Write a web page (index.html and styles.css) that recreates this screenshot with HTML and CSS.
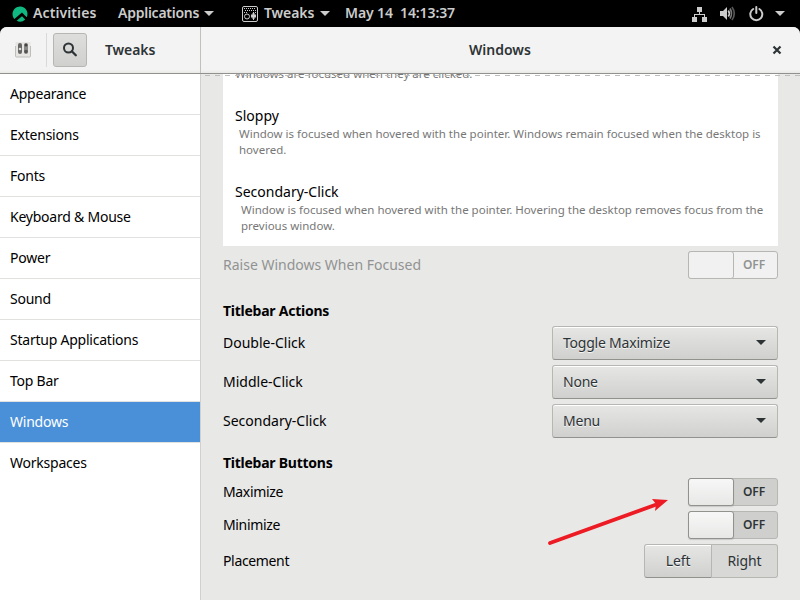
FILE: index.html
```html
<!DOCTYPE html>
<html lang="en">
<head>
<meta charset="utf-8">
<title>Tweaks</title>
<link rel="stylesheet" href="styles.css">
</head>
<body>
<header class="topbar">
  <svg class="distro" width="16" height="16" viewBox="0 0 16 16"><path fill="#10b981" d="M14.7 11.200a7.500 7.500 0 0 0 .8-3.200A7.500 7.500 0 1 0 2.300 12.900L10 6.500zM13.200 13.400 10 10.200 4.700 14.800a7.500 7.500 0 0 0 8.500-1.400z"/></svg>
  <span class="activities">Activities</span>
  <span class="applications">Applications</span>
  <svg class="caret" width="10" height="5"><path d="M0 0h10L5 5z"/></svg>
  <svg class="appicon" width="16" height="16" fill="none" stroke="#ccc"><rect x=".5" y=".5" width="15" height="15" rx="1.5"/><path stroke-dasharray="1 1" d="M2 2.5h12M3 4.5h11M2 6.5h3M11 6.5h3"/><circle cx="5" cy="10.5" r="2.5"/><path d="M9 9.5h5M9 10.5h5M11.5 7v7M10 8v4h3V8z"/></svg>
  <span class="appname">Tweaks</span>
  <svg class="caret" width="10" height="5"><path d="M0 0h10L5 5z"/></svg>
  <span class="clock">May 14&nbsp; 14:13:37</span>
  <div class="tray">
    <svg width="16" height="16"><path fill="#ccc" d="M5 1h5v5H8v2h5v3h2v5h-5v-5h2V9H3v2h2v5H0v-5h2V8h5V6H5z"/></svg>
    <svg width="16" height="16" fill="none"><path fill="#ccc" d="M0 5h3l4-4v13l-4-4H0z"/><path stroke="#ccc" stroke-width="1.7" d="M8.3 4.5q2 3 0 6"/><path stroke="#777" stroke-width="1.7" d="M10 2.5q3 5 0 10"/><path stroke="#555" stroke-width="1.7" d="M12 1q4.500 6.500 0 13"/></svg>
    <svg width="15" height="16" fill="none" stroke="#ccc" stroke-width="2" stroke-linecap="round"><path d="M4.200 3a6 6 0 1 0 6.200 0M7.300 1v6"/></svg>
    <svg class="caret" width="10" height="5"><path d="M0 0h10L5 5z"/></svg>
  </div>
</header>
<main class="window">
  <div class="headerbar">
    <div class="head-left">
      <svg class="tweaks" width="16" height="16"><rect x=".5" y="-1" width="15" height="16" rx="1.500" fill="#e6e5e2"/><path d="M.5 4v10q0 1 1 1h13q1 0 1-1V4" fill="none" stroke="#bdbdb9"/><rect x="3" y="1" width="4" height="11" rx="2" fill="#666"/><rect x="9" y="1" width="4" height="11" rx="2" fill="#888"/><circle cx="5" cy="7" r="1.300" fill="#ddd"/><circle cx="11" cy="9.500" r="1.800" fill="#555"/><circle cx="11" cy="3" r="1.500" fill="#444"/></svg>
      <button class="search"><svg width="16" height="16" fill="none" stroke="#2e3436"><circle cx="6.500" cy="6" r="4.500" stroke-width="2"/><path d="m9.800 9.300 4 4" stroke-width="2.300" stroke-linecap="round"/></svg></button>
      <strong>Tweaks</strong>
    </div>
    <div class="head-main"><strong>Windows</strong><svg class="close" width="10" height="10"><path d="m1.500 1.500 7 7m0-7-7 7" stroke="#2e3436" stroke-width="2.200"/></svg></div>
  </div>
  <div class="body">
    <nav>
      <a>Appearance</a><a>Extensions</a><a>Fonts</a><a>Keyboard &amp; Mouse</a><a>Power</a><a>Sound</a><a>Startup Applications</a><a>Top Bar</a><a class="selected">Windows</a><a>Workspaces</a>
    </nav>
    <section class="content">
      <div class="focus">
        <p class="cut">Windows are focused when they are clicked.</p>
        <h3>Sloppy</h3>
        <p class="sloppy">Window is focused when hovered with the pointer. Windows remain focused when the desktop is<br>hovered.</p>
        <h3 class="second">Secondary-Click</h3>
        <p class="secondary">Window is focused when hovered with the pointer. Hovering the desktop removes focus from the<br>previous window.</p>
      </div>
      <div class="row raise"><span>Raise Windows When Focused</span><div class="switch disabled"><i></i><b>OFF</b></div></div>
      <h2>Titlebar Actions</h2>
      <div class="row action"><span>Double-Click</span><button class="combo"><span>Toggle Maximize</span><svg width="10" height="5"><path d="M0 0h10L5 5z"/></svg></button></div>
      <div class="row action"><span>Middle-Click</span><button class="combo"><span>None</span><svg width="10" height="5"><path d="M0 0h10L5 5z"/></svg></button></div>
      <div class="row action"><span>Secondary-Click</span><button class="combo"><span>Menu</span><svg width="10" height="5"><path d="M0 0h10L5 5z"/></svg></button></div>
      <h2 class="buttons">Titlebar Buttons</h2>
      <div class="row toggle"><span>Maximize</span><div class="switch"><i></i><b>OFF</b></div></div>
      <div class="row toggle"><span>Minimize</span><div class="switch"><i></i><b>OFF</b></div></div>
      <div class="row placement"><span>Placement</span><div class="segmented"><button>Left</button><button class="active">Right</button></div></div>
    </section>
  </div>
</main>
<svg class="undershoot" width="599" height="1"><path d="M-6 .5h605" stroke="#bdbdbb" stroke-dasharray="5 5"/></svg>
<svg class="arrow" width="124" height="50"><path d="m3 46 105-38" stroke="#ed1c24" stroke-width="3.800" stroke-linecap="round"/><path fill="#ed1c24" d="m121 3-16-1 4 5-1 7z"/></svg>
</body>
</html>
```
FILE: styles.css
```css
* { box-sizing: border-box; }
body { margin: 0; width: 800px; height: 600px; overflow: hidden; background: #000; font: 14px/20px "Noto Sans", sans-serif; letter-spacing: -.1px; color: #000; white-space: nowrap; }
svg { display: block; flex: none; }
button { font: inherit; letter-spacing: inherit; padding: 0; color: #2e3436; }
h2, h3, p { margin: 0; }
.topbar { height: 27px; display: flex; align-items: center; padding-left: 12px; color: #ccc; font-weight: 600; }
.topbar span { flex: none; position: relative; top: -1px; }
.activities { width: 85px; margin-left: 5px; letter-spacing: .1px; }
.applications { width: 86px; letter-spacing: -.25px; }
.caret { fill: #ccc; }
.appicon { margin: 0 6px 0 28px; }
.appname { width: 56px; }
.clock { margin-left: 15px; }
.tray { margin-left: auto; padding-right: 15px; display: flex; align-items: center; gap: 11px; }
.tray svg:nth-child(2) { margin: 0 2px 0 1px; }
.window { height: 573px; border-radius: 7px 7px 0 0; overflow: hidden; background: #e8e8e7; }
.headerbar { height: 47px; display: flex; background: linear-gradient(#f3f3f3 43px, #e8e8e7); border-bottom: 1px solid #91918d; color: #2e3436; }
.head-left { width: 201px; border-right: 1px solid #c0c0bd; display: flex; align-items: center; padding-left: 15px; }
.search { width: 34px; height: 34px; margin: 0 18px 0 22px; border: 1px solid #b6b6b3; border-radius: 3px; background: linear-gradient(#dededd, #d0d0ce); display: grid; place-items: center; position: relative; }
.search::before { content: ""; position: absolute; left: -8px; top: -1px; height: 34px; border-left: 1px solid #dadad8; }
.head-main { flex: 1; display: flex; align-items: center; }
.head-main strong { margin-left: 268px; letter-spacing: 0; }
.headerbar strong { font-weight: 600; }
.close { margin: 0 18px 0 auto; }
.body { display: flex; height: 526px; }
nav { flex: none; width: 201px; border-right: 1px solid #d0d0ce; background: #fff; letter-spacing: -.23px; }
nav a { display: flex; align-items: center; height: 41px; padding-left: 10px; border-bottom: 1px solid #e1e1df; }
nav a:last-child { border: 0; height: 40px; }
.selected { background: #4a90d9; color: #fff; }
.content { flex: 1; padding: 0 22px; letter-spacing: 0; }
.focus { height: 172px; background: #fff; padding-left: 12px; overflow: hidden; }
.focus p { color: #777; font-size: 11.5px; line-height: 16px; }
.focus .cut { margin-top: -8px; height: 16px; }
h3 { font: inherit; margin-top: 24px; }
h3.second { margin-top: 24px; }
.focus .sloppy { padding-left: 4px; }
.focus .secondary { padding-left: 6px; }
.row { display: flex; align-items: center; justify-content: space-between; }
.raise { height: 38px; color: #919392; }
h2 { font-size: 14px; line-height: 20px; font-weight: 700; margin-top: 17px; letter-spacing: -.25px; }
.action { height: 39px; }
h2 + .action { margin-top: 2px; }
h2.buttons { margin-top: 13px; }
.combo { width: 226px; height: 34px; border: 1px solid #b6b6b3; border-bottom-color: #91918d; border-radius: 3px; padding: 0 11px 0 10px; display: flex; align-items: center; justify-content: space-between; background: linear-gradient(#e6e6e5, #d0d0ce); box-shadow: inset 0 1px #fff; text-shadow: 0 1px #fffc; letter-spacing: -.22px; }
.combo svg { fill: #2e3436; }
.toggle, .placement { letter-spacing: -.35px; }
.toggle { height: 33px; }
h2 + .toggle { margin-top: 2px; }
.switch { width: 90px; height: 28px; display: flex; border: 1px solid #b6b6b3; border-radius: 3px; background: #cfcfce; color: #2e3436; letter-spacing: -.1px; }
.switch i { width: 46px; height: 28px; margin: -1px 0 0 -1px; border: 1px solid #91918d; border-radius: 3px; background: linear-gradient(#f7f7f7, #e8e8e7); box-shadow: 0 1px 1px #0002; }
.switch b { flex: 1; text-align: center; font-size: 12px; line-height: 26px; padding-right: 3px; font-weight: 600; }
.switch.disabled { background: #f1f1f1; color: #919392; }
.disabled i { background: #f1f1f1; border-color: #b6b6b3; box-shadow: none; }
.placement { height: 39px; }
.segmented { display: flex; letter-spacing: -.1px; }
.segmented button { width: 68px; height: 34px; border: 1px solid #b6b6b3; border-bottom-color: #91918d; border-radius: 3px 0 0 3px; background: linear-gradient(#e6e6e5, #d0d0ce); box-shadow: inset 0 1px #fff; text-shadow: 0 1px #fffc; }
.segmented .active { width: 66px; border-left: 0; border-bottom-color: #b6b6b3; border-radius: 0 3px 3px 0; background: #d8d8d7; box-shadow: none; text-shadow: none; }
.undershoot { position: absolute; left: 201px; top: 75px; }
.arrow { position: absolute; left: 547px; top: 497px; }
```
